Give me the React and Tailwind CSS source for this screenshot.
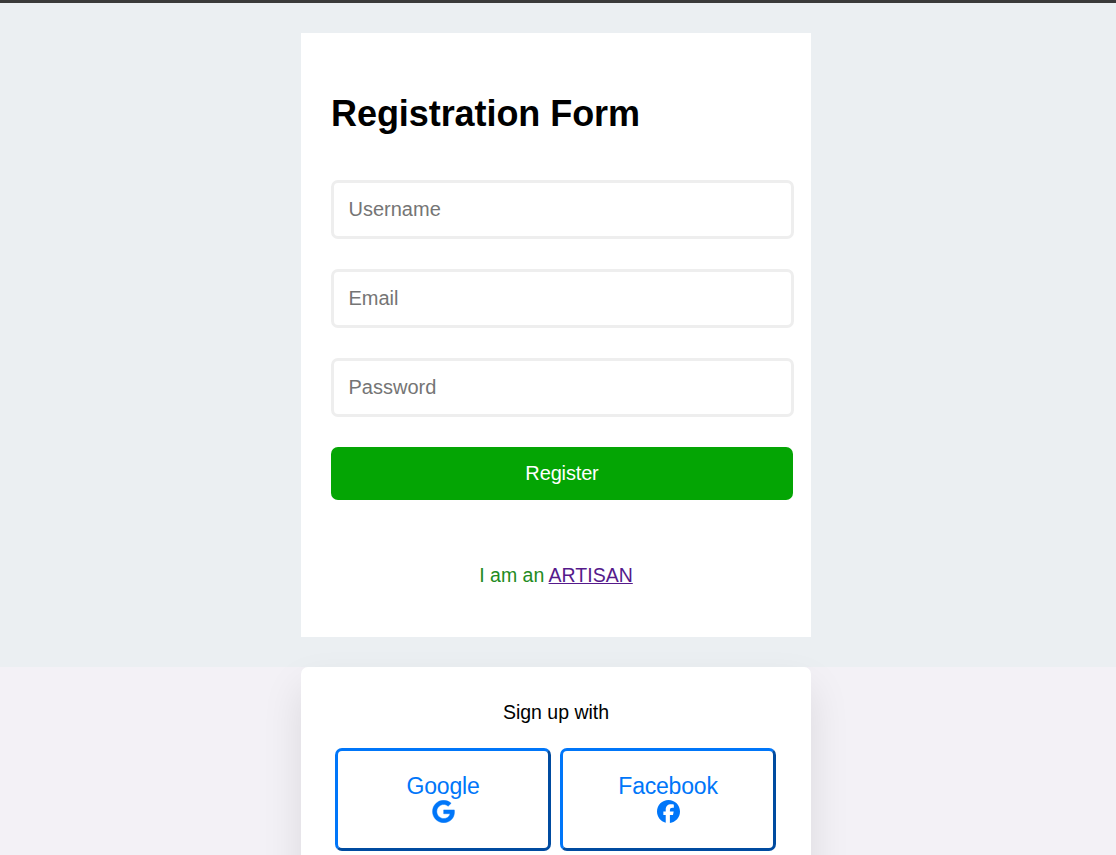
import { FaGoogle } from "react-icons/fa6";

const fields = [
  { label: "Username", type: "text" },
  { label: "Email", type: "email" },
  { label: "Password", type: "password" },
];

function GoogleIcon({ className }) {
  return <FaGoogle className={className} stroke="currentColor" strokeWidth="10" />;
}

function FacebookIcon({ className }) {
  return (
    <svg viewBox="0 0 512 512" fill="currentColor" className={className} aria-hidden="true">
      <path d="M512 256C512 114.6 397.4 0 256 0S0 114.6 0 256C0 376 82.7 476.8 194.2 504.5V334.2H141.4V256h52.8V222.3c0-87.1 39.4-127.5 125-127.5c16.2 0 44.2 3.2 55.7 6.4V172c-6-.6-16.5-1-29.6-1c-42 0-58.2 15.9-58.2 57.2V256h83.6l-14.4 78.2H287V510.1C413.8 494.8 512 386.9 512 256z" />
    </svg>
  );
}

const providers = [
  { name: "Google", Icon: GoogleIcon },
  { name: "Facebook", Icon: FacebookIcon },
];

export default function App() {
  return (
    <div className="h-[855px] overflow-hidden bg-[#f3f1f6] font-['Liberation_Sans',Arial,sans-serif] text-black">
      <div className="h-[3px] bg-[#3a3a3a]" />
      <main className="h-[664px] bg-[#ebeff2] pt-[30px]">
        <form className="ml-[301px] flex h-[604px] w-[510px] flex-col bg-white px-[30px] pt-[60px]">
          <h1 className="h-[87px] text-4xl leading-[41px] font-bold tracking-[-0.06px]">Registration Form</h1>
          <div className="flex flex-col gap-[30px]">
            {fields.map(({ label, type }) => (
              <input
                key={label}
                type={type}
                placeholder={label}
                className="h-[59px] w-[463px] rounded-[7px] border-[3px] border-[#eeeeee] px-[14.5px] text-xl placeholder:text-[#757575]"
              />
            ))}
            <button type="button" className="h-[53px] w-[462px] rounded-[7px] bg-[#04a504] pb-px text-xl tracking-[-0.15px] text-white">
              Register
            </button>
          </div>
          <p className="mt-[63px] text-center text-[19.5px] leading-6 text-[#228b22]">
            I am an <a href="#artisan" className="text-[#551a8b] underline">ARTISAN</a>
          </p>
        </form>
      </main>
      <section className="relative ml-[301px] h-[230px] w-[510px] rounded-[7px] bg-white pt-[33px] shadow-[0_20px_40px_rgba(0,0,0,0.1)]">
        <p className="text-center text-[19.5px] leading-6">Sign up with</p>
        <div className="mt-6 ml-[34px] flex gap-[9px]">
          {providers.map(({ name, Icon }) => (
            <button
              key={name}
              type="button"
              className="flex h-[103px] w-[216px] flex-col items-center rounded-[7px] border-[3px] border-t-[#0076f9] border-r-[#004ba0] border-b-[#004ba0] border-l-[#0076f9] pt-[22px] text-[23px] leading-[26px] tracking-[-0.2px] text-[#0076f9]"
            >
              <span>{name}</span>
              <Icon className="mt-px size-[23px]" />
            </button>
          ))}
        </div>
      </section>
    </div>
  );
}
